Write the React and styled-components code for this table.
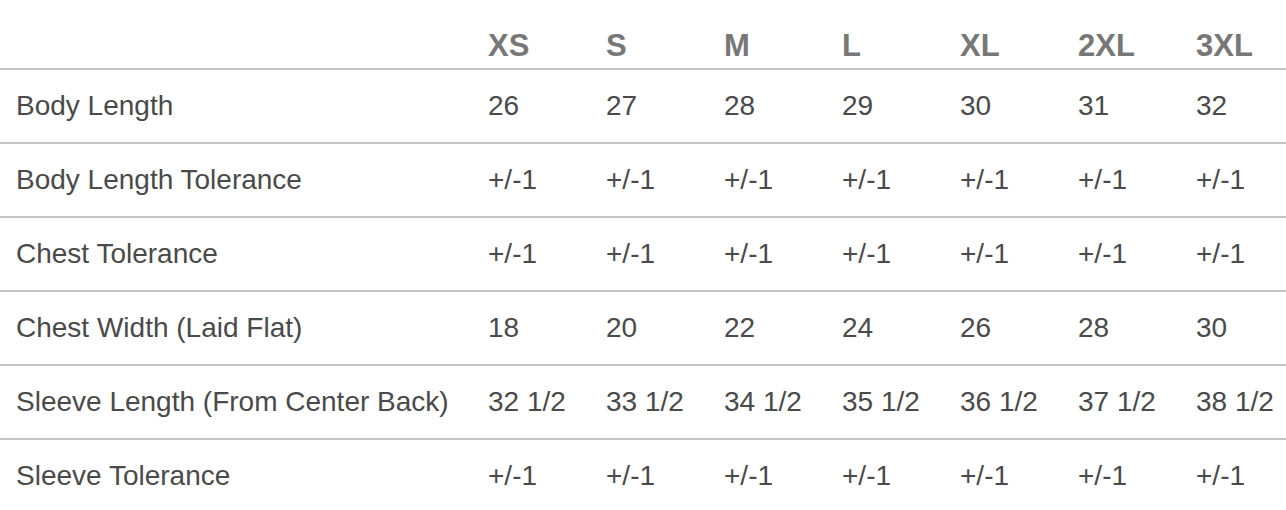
import React from 'react'
import styled, { createGlobalStyle } from 'styled-components'

const GlobalStyle = createGlobalStyle`
  html, body {
    margin: 0;
    padding: 0;
    background: #ffffff;
  }
  body {
    font-family: "Liberation Sans", Arial, Helvetica, sans-serif;
    overflow: hidden;
  }
`

const sizes = ['XS', 'S', 'M', 'L', 'XL', '2XL', '3XL']

const rows = [
  { label: 'Body Length', values: ['26', '27', '28', '29', '30', '31', '32'] },
  { label: 'Body Length Tolerance', values: Array(7).fill('+/-1') },
  { label: 'Chest Tolerance', values: Array(7).fill('+/-1') },
  { label: 'Chest Width (Laid Flat)', values: ['18', '20', '22', '24', '26', '28', '30'] },
  {
    label: 'Sleeve Length (From Center Back)',
    values: ['32 1/2', '33 1/2', '34 1/2', '35 1/2', '36 1/2', '37 1/2', '38 1/2'],
  },
  { label: 'Sleeve Tolerance', values: Array(7).fill('+/-1') },
]

const Page = styled.div`
  width: 1286px;
  height: 510px;
  overflow: hidden;
`

const Heading = styled.h2`
  margin: -27px 0 0 16px;
  font-size: 31px;
  line-height: 31px;
  font-weight: 700;
  color: #8a8a8a;
  white-space: nowrap;
`

const Table = styled.div`
  display: flex;
  flex-direction: column;
`

const Row = styled.div`
  display: grid;
  grid-template-columns: 472px repeat(6, 118px) 1fr;
  box-sizing: border-box;
  height: ${props => (props.head ? '66px' : '74px')};
  align-items: ${props => (props.head ? 'end' : 'center')};
  padding-bottom: ${props => (props.head ? '7px' : '0')};
  border-bottom: 2px solid #c3c3c3;
`

const Label = styled.div`
  padding-left: 16px;
  font-size: 28px;
  color: #4a4a4a;
  white-space: nowrap;
`

const Cell = styled.div`
  padding-left: 16px;
  font-size: 28px;
  color: #4a4a4a;
  white-space: nowrap;
`

const HeadCell = styled.div`
  padding-left: 16px;
  font-size: 31px;
  line-height: 1;
  font-weight: 700;
  color: #777777;
  white-space: nowrap;
`

const App = () => {
  return (
    <Page>
      <GlobalStyle />
      <Heading>Product Measurements</Heading>
      <Table>
        <Row head>
          <div />
          {sizes.map(size => (
            <HeadCell key={size}>{size}</HeadCell>
          ))}
        </Row>
        {rows.map(row => (
          <Row key={row.label}>
            <Label>{row.label}</Label>
            {row.values.map((value, i) => (
              <Cell key={i}>{value}</Cell>
            ))}
          </Row>
        ))}
      </Table>
    </Page>
  )
}

export default App
